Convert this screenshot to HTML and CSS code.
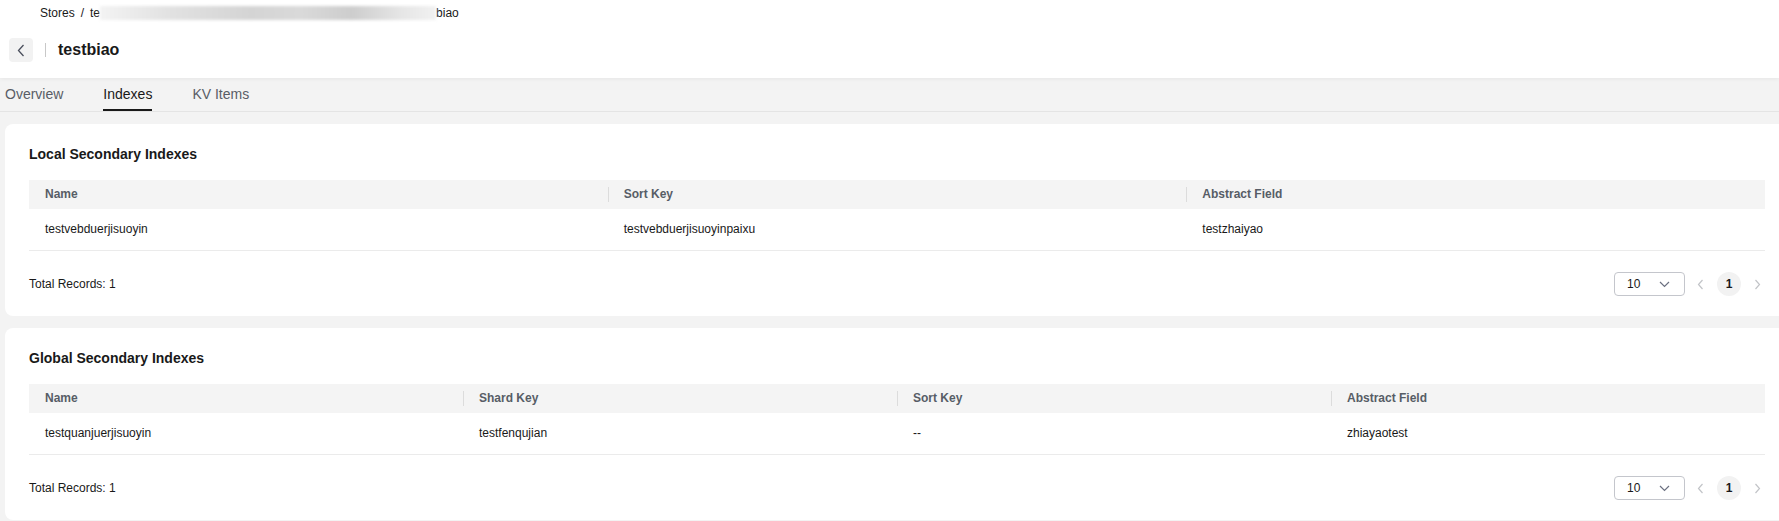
FILE: index.html
```html
<!DOCTYPE html>
<html lang="en">
<head>
<meta charset="utf-8">
<title>testbiao - Indexes</title>
<link rel="stylesheet" href="styles.css">
</head>
<body>
<div class="topbar">
  <div class="breadcrumb">
    <span class="crumb">Stores</span>
    <span class="sep">/</span>
    <span class="crumb">te</span><span class="blur"></span><span class="crumb">biao</span>
  </div>
  <div class="titlebar">
    <button class="back" type="button" aria-label="Back">
      <svg width="8" height="13" viewBox="0 0 8 13"><path d="M6.5 1 L1.5 6.5 L6.5 12" fill="none" stroke="#4a4f5c" stroke-width="1.3"/></svg>
    </button>
    <span class="vdiv"></span>
    <h1 class="title">testbiao</h1>
  </div>
</div>

<div class="tabs">
  <div class="tab">Overview</div>
  <div class="tab active">Indexes</div>
  <div class="tab">KV Items</div>
</div>

<div class="main">
  <section class="card">
    <h2 class="card-title">Local Secondary Indexes</h2>
    <div class="table cols-3">
      <div class="thead">
        <div class="th">Name</div>
        <div class="th div">Sort Key</div>
        <div class="th div">Abstract Field</div>
      </div>
      <div class="trow">
        <div class="td">testvebduerjisuoyin</div>
        <div class="td">testvebduerjisuoyinpaixu</div>
        <div class="td">testzhaiyao</div>
      </div>
    </div>
    <div class="footer">
      <span class="total">Total Records: 1</span>
      <div class="pager">
        <div class="select"><span>10</span>
          <svg width="11" height="7" viewBox="0 0 11 7"><path d="M1 1 L5.5 5.5 L10 1" fill="none" stroke="#6b7080" stroke-width="1.2"/></svg>
        </div>
        <span class="arrow prev"><svg width="7" height="11" viewBox="0 0 7 11"><path d="M5.5 1 L1.5 5.5 L5.5 10" fill="none" stroke="#c2c4c8" stroke-width="1.2"/></svg></span>
        <span class="page">1</span>
        <span class="arrow next"><svg width="7" height="11" viewBox="0 0 7 11"><path d="M1.5 1 L5.5 5.5 L1.5 10" fill="none" stroke="#c2c4c8" stroke-width="1.2"/></svg></span>
      </div>
    </div>
  </section>

  <section class="card">
    <h2 class="card-title">Global Secondary Indexes</h2>
    <div class="table cols-4">
      <div class="thead">
        <div class="th">Name</div>
        <div class="th div">Shard Key</div>
        <div class="th div">Sort Key</div>
        <div class="th div">Abstract Field</div>
      </div>
      <div class="trow">
        <div class="td">testquanjuerjisuoyin</div>
        <div class="td">testfenqujian</div>
        <div class="td">--</div>
        <div class="td">zhiayaotest</div>
      </div>
    </div>
    <div class="footer">
      <span class="total">Total Records: 1</span>
      <div class="pager">
        <div class="select"><span>10</span>
          <svg width="11" height="7" viewBox="0 0 11 7"><path d="M1 1 L5.5 5.5 L10 1" fill="none" stroke="#6b7080" stroke-width="1.2"/></svg>
        </div>
        <span class="arrow prev"><svg width="7" height="11" viewBox="0 0 7 11"><path d="M5.5 1 L1.5 5.5 L5.5 10" fill="none" stroke="#c2c4c8" stroke-width="1.2"/></svg></span>
        <span class="page">1</span>
        <span class="arrow next"><svg width="7" height="11" viewBox="0 0 7 11"><path d="M1.5 1 L5.5 5.5 L1.5 10" fill="none" stroke="#c2c4c8" stroke-width="1.2"/></svg></span>
      </div>
    </div>
  </section>
</div>
</body>
</html>
```
FILE: styles.css
```css
html, body {
  margin: 0;
  padding: 0;
  overflow: hidden;
}
body {
  background: #f3f3f3;
  font-family: "Liberation Sans", Arial, sans-serif;
  color: #191919;
  font-size: 12px;
}

/* Top bar */
.topbar {
  background: #ffffff;
  height: 78px;
  box-sizing: border-box;
  box-shadow: 0 1px 4px rgba(0, 0, 0, 0.06);
  position: relative;
  z-index: 1;
}
.breadcrumb {
  display: flex;
  align-items: center;
  padding: 5px 0 0 40px;
  height: 16px;
  line-height: 16px;
  font-size: 12px;
  color: #191919;
}
.sep {
  margin: 0 6px;
  color: #191919;
}
.blur {
  display: inline-block;
  width: 336px;
  height: 14px;
  background: linear-gradient(to right, #f3f3f3 0%, #e2e2e2 20%, #d4d4d4 45%, #d9d9d9 60%, #cdcdcd 75%, #e6e6e6 90%, #f1f1f1 100%);
  filter: blur(1.5px);
}
.titlebar {
  display: flex;
  align-items: center;
  margin-top: 17px;
  padding-left: 9px;
  height: 24px;
}
.back {
  width: 24px;
  height: 24px;
  border: none;
  border-radius: 4px;
  background: #f2f2f2;
  padding: 0;
  display: flex;
  align-items: center;
  justify-content: center;
}
.vdiv {
  width: 1px;
  height: 14px;
  background: #c8c8c8;
  margin: 0 12px;
}
.title {
  margin: 0;
  font-size: 16px;
  font-weight: bold;
  line-height: 24px;
  color: #191919;
}

/* Tabs */
.tabs {
  display: flex;
  gap: 40px;
  padding: 0 0 0 5px;
  border-bottom: 1px solid #e4e4e4;
  height: 34px;
  box-sizing: border-box;
}
.tab {
  font-size: 14px;
  line-height: 20px;
  padding-top: 6px;
  padding-bottom: 5px;
  height: 33px;
  box-sizing: border-box;
  color: #595d66;
  border-bottom: 2px solid transparent;
}
.tab.active {
  color: #191919;
  border-bottom-color: #191919;
}

/* Cards */
.main {
  padding-left: 5px;
  width: 1789px;
  box-sizing: border-box;
}
.card {
  background: #ffffff;
  border-radius: 8px;
  margin-top: 12px;
  padding: 20px 24px 20px 24px;
}
.card-title {
  margin: 0 0 16px 0;
  font-size: 14px;
  font-weight: bold;
  line-height: 20px;
  color: #191919;
}

.table .thead,
.table .trow {
  display: grid;
}
.cols-3 .thead, .cols-3 .trow { grid-template-columns: 1fr 1fr 1fr; }
.cols-4 .thead, .cols-4 .trow { grid-template-columns: 1fr 1fr 1fr 1fr; }

.thead {
  background: #f4f4f4;
  height: 29px;
}
.th {
  position: relative;
  padding: 0 16px;
  line-height: 29px;
  font-size: 12px;
  font-weight: bold;
  color: #575d66;
}
.th.div::before {
  content: "";
  position: absolute;
  left: 0;
  top: 7px;
  width: 1px;
  height: 15px;
  background: #dcdcdc;
}
.trow {
  height: 42px;
  box-sizing: border-box;
  border-bottom: 1px solid #ebebeb;
}
.td {
  padding: 0 16px;
  line-height: 41px;
  font-size: 12px;
  color: #191919;
}

/* Footer */
.footer {
  display: flex;
  align-items: center;
  justify-content: space-between;
  margin-top: 21px;
  height: 24px;
}
.total {
  font-size: 12px;
  color: #191919;
}
.pager {
  display: flex;
  align-items: center;
}
.select {
  width: 71px;
  height: 24px;
  box-sizing: border-box;
  border: 1px solid #c4c6cc;
  border-radius: 4px;
  display: flex;
  align-items: center;
  justify-content: space-between;
  padding: 0 14px 0 12px;
  font-size: 12px;
  color: #191919;
}
.arrow {
  display: flex;
  align-items: center;
  justify-content: center;
  height: 24px;
}
.prev {
  width: 20px;
  margin-left: 5px;
  margin-right: 7px;
}
.next {
  width: 16px;
  margin-left: 8px;
}
.page {
  width: 24px;
  height: 24px;
  border-radius: 50%;
  background: #f2f2f2;
  font-size: 12px;
  font-weight: bold;
  line-height: 24px;
  text-align: center;
  color: #191919;
}
```
